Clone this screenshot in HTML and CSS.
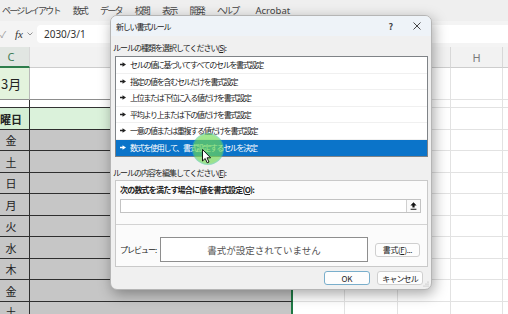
FILE: index.html
```html
<!DOCTYPE html>
<html lang="ja">
<head>
    <meta charset="UTF-8">
    <title>新しい書式ルール</title>
    <link rel="stylesheet" href="styles.css">
</head>
<body>

<div class="excel">
    <div class="ribbon">
        <span>ページ レイアウト</span>
        <span>数式</span>
        <span>データ</span>
        <span>校閲</span>
        <span>表示</span>
        <span>開発</span>
        <span>ヘルプ</span>
        <span class="latin">Acrobat</span>
    </div>

    <div class="fbar">
        <span class="check">✓</span>
        <span class="fx">fx</span>
        <svg class="chev" width="6" height="4" viewBox="0 0 6 4"><path d="M0.5 0.5 L3 3 L5.5 0.5" fill="none" stroke="#888" stroke-width="0.9"/></svg>
        <div class="fbox">2030/3/1</div>
    </div>

    <div class="sheet">
        <div class="row hd">
            <div class="c">C</div><div class="d"></div><div class="e"></div><div class="f"></div><div class="g"></div><div class="h">H</div><div class="i"></div>
        </div>
        <div class="row mon">
            <div class="c">3月</div><div class="d"></div><div class="e"></div><div class="f"></div><div class="g"></div><div class="h"></div><div class="i"></div>
        </div>
        <div class="row gap">
            <div class="c"></div><div class="d"></div><div class="e"></div><div class="f"></div><div class="g"></div><div class="h"></div><div class="i"></div>
        </div>
        <div class="row week">
            <div class="c">曜日</div><div class="d"></div><div class="e"></div><div class="f"></div><div class="g"></div><div class="h"></div><div class="i"></div>
        </div>
        <div class="row sel r1">
            <div class="c">金</div><div class="d"></div><div class="e"></div><div class="f"></div><div class="g"></div><div class="h"></div><div class="i"></div>
        </div>
        <div class="row sel r2">
            <div class="c">土</div><div class="d"></div><div class="e"></div><div class="f"></div><div class="g"></div><div class="h"></div><div class="i"></div>
        </div>
        <div class="row sel r1">
            <div class="c">日</div><div class="d"></div><div class="e"></div><div class="f"></div><div class="g"></div><div class="h"></div><div class="i"></div>
        </div>
        <div class="row sel r2">
            <div class="c">月</div><div class="d"></div><div class="e"></div><div class="f"></div><div class="g"></div><div class="h"></div><div class="i"></div>
        </div>
        <div class="row sel r1">
            <div class="c">火</div><div class="d"></div><div class="e"></div><div class="f"></div><div class="g"></div><div class="h"></div><div class="i"></div>
        </div>
        <div class="row sel r2">
            <div class="c">水</div><div class="d"></div><div class="e"></div><div class="f"></div><div class="g"></div><div class="h"></div><div class="i"></div>
        </div>
        <div class="row sel r1">
            <div class="c">木</div><div class="d"></div><div class="e"></div><div class="f"></div><div class="g"></div><div class="h"></div><div class="i"></div>
        </div>
        <div class="row sel r2">
            <div class="c">金</div><div class="d"></div><div class="e"></div><div class="f"></div><div class="g"></div><div class="h"></div><div class="i"></div>
        </div>
        <div class="row sel r1">
            <div class="c">土</div><div class="d"></div><div class="e"></div><div class="f"></div><div class="g"></div><div class="h"></div><div class="i"></div>
        </div>
    </div>
</div>

<!-- ダイアログ -->
<div class="dlg">
    <div class="dlg-title">
        <span class="dlg-name">新しい書式ルール</span>
        <span class="help">?</span>
        <svg class="close" width="8" height="8" viewBox="0 0 8 8"><path d="M0.5 0.5 L7.5 7.5 M7.5 0.5 L0.5 7.5" stroke="#333" stroke-width="0.9"/></svg>
    </div>
    <div class="dlg-body">
        <div class="lbl lbl-top">ルールの種類を選択してください(<u>S</u>):</div>
        <ul class="rules">
            <li><svg class="arr" width="6" height="5" viewBox="0 0 6 5"><path d="M0 2.5 H3" stroke="currentColor" stroke-width="1.3"/><path d="M2.5 0.3 L6 2.5 L2.5 4.7 Z" fill="currentColor"/></svg>セルの値に基づいてすべてのセルを書式設定</li>
            <li><svg class="arr" width="6" height="5" viewBox="0 0 6 5"><path d="M0 2.5 H3" stroke="currentColor" stroke-width="1.3"/><path d="M2.5 0.3 L6 2.5 L2.5 4.7 Z" fill="currentColor"/></svg>指定の値を含むセルだけを書式設定</li>
            <li><svg class="arr" width="6" height="5" viewBox="0 0 6 5"><path d="M0 2.5 H3" stroke="currentColor" stroke-width="1.3"/><path d="M2.5 0.3 L6 2.5 L2.5 4.7 Z" fill="currentColor"/></svg>上位または下位に入る値だけを書式設定</li>
            <li><svg class="arr" width="6" height="5" viewBox="0 0 6 5"><path d="M0 2.5 H3" stroke="currentColor" stroke-width="1.3"/><path d="M2.5 0.3 L6 2.5 L2.5 4.7 Z" fill="currentColor"/></svg>平均より上または下の値だけを書式設定</li>
            <li><svg class="arr" width="6" height="5" viewBox="0 0 6 5"><path d="M0 2.5 H3" stroke="currentColor" stroke-width="1.3"/><path d="M2.5 0.3 L6 2.5 L2.5 4.7 Z" fill="currentColor"/></svg>一意の値または重複する値だけを書式設定</li>
            <li class="on"><svg class="arr" width="6" height="5" viewBox="0 0 6 5"><path d="M0 2.5 H3" stroke="currentColor" stroke-width="1.3"/><path d="M2.5 0.3 L6 2.5 L2.5 4.7 Z" fill="currentColor"/></svg>数式を使用して、書式設定するセルを決定</li>
        </ul>
        <div class="lbl lbl-mid">ルールの内容を編集してください(<u>E</u>):</div>
        <div class="grp">
            <div class="grp-lbl">次の数式を満たす場合に値を書式設定(<u>O</u>):</div>
            <div class="formula">
                <span class="ref"><svg width="7" height="8" viewBox="0 0 7 8"><path d="M3.5 0.3 L6.6 3.6 H4.6 V5.6 H2.4 V3.6 H0.4 Z" fill="#111"/><path d="M0.6 7.2 H6.4" stroke="#111" stroke-width="1.1"/></svg></span>
            </div>
            <div class="grp-sep"></div>
            <div class="prev-row">
                <span class="prev-lbl">プレビュー:</span>
                <div class="preview">書式が設定されていません</div>
                <button class="btn fmt">書式(<u>F</u>)...</button>
            </div>
        </div>
        <div class="btns">
            <button class="btn ok">OK</button>
            <button class="btn">キャンセル</button>
        </div>
    </div>
    <svg class="grip" width="6" height="6" viewBox="0 0 6 6"><circle cx="5" cy="1" r="0.6" fill="#aaa"/><circle cx="3" cy="3" r="0.6" fill="#aaa"/><circle cx="5" cy="3" r="0.6" fill="#aaa"/><circle cx="1" cy="5" r="0.6" fill="#aaa"/><circle cx="3" cy="5" r="0.6" fill="#aaa"/><circle cx="5" cy="5" r="0.6" fill="#aaa"/></svg>
</div>

<!-- クリック位置の表示 -->
<div class="spot"></div>
<svg class="pointer" width="10" height="15" viewBox="0 0 10 15"><path d="M0.5 0.5 V12 L3.2 9.5 L5.2 13.8 L7 13 L5 8.8 H8.6 Z" fill="#fff" stroke="#000" stroke-width="0.9" stroke-linejoin="round"/></svg>

</body>
</html>
```

FILE: styles.css
```css
* {
    margin: 0;
    padding: 0;
    box-sizing: border-box;
}

body {
    width: 508px;
    height: 314px;
    overflow: hidden;
    position: relative;
    background: #fff;
    font-family: "Noto Sans CJK JP", "Noto Sans", sans-serif;
    color: #222;
}

/* ---- Excel 背景 ---- */
.ribbon {
    height: 21px;
    background: #efefef;
    display: flex;
    align-items: center;
    gap: 13px;
    padding-left: 2px;
    font-size: 9px;
    letter-spacing: -1.8px;
    color: #444;
}

.ribbon .latin {
    margin-left: 4px;
    font-family: "Noto Sans", sans-serif;
    font-size: 9.5px;
    letter-spacing: 0;
}

.fbar {
    height: 26px;
    background: #f4f4f4;
    display: flex;
    align-items: center;
}

.check {
    width: 15px;
    margin-left: 0;
    font-size: 9px;
    color: #9a9a9a;
}

.fx {
    font-family: "Liberation Serif", serif;
    font-style: italic;
    font-size: 11px;
    color: #333;
}

.chev {
    margin-left: 4px;
}

.fbox {
    flex: 1;
    height: 18px;
    margin-left: 4px;
    padding-left: 7px;
    background: #fff;
    border-radius: 4px 0 0 4px;
    font-family: "Noto Sans", sans-serif;
    font-size: 10px;
    line-height: 18px;
    color: #333;
}

.row {
    display: grid;
    grid-template-columns: 30px 263px 52px 53px 53px 52px 1fr;
}

.row > div {
    border-right: 1px solid #e2e2e2;
    border-bottom: 1px solid #e2e2e2;
    display: flex;
    align-items: center;
    justify-content: center;
    padding-right: 7px;
}

.hd {
    height: 21px;
}

.hd > div {
    background: #f2f2f2;
    color: #7a7a7a;
    font-family: "Noto Sans", sans-serif;
    font-size: 11px;
    border-right-color: #d8d8d8;
    border-bottom-color: #cdcdcd;
}

.hd > .c {
    background: #e1e6e2;
    color: #3f7c55;
    border-bottom: 2px solid #2d7d4b;
}

.hd > .h {
    padding-right: 0;
}

.mon {
    height: 32px;
}

.mon > .c {
    background: #e3f3dd;
    justify-content: flex-start;
    padding-left: 1px;
    font-size: 13px;
    color: #222;
}

.mon > .c,
.mon > .d {
    border-bottom-color: #8d8d8d;
}

.mon > .c {
    border-right-color: #b9b9b9;
}

.gap {
    height: 8px;
}

.gap > .c,
.gap > .d {
    border-bottom-color: #333;
}

.gap > .c {
    border-right-color: #333;
}

.week {
    height: 22px;
}

.week > .c {
    background: #d4eed4;
    font-size: 11px;
    font-weight: bold;
}

.week > .d {
    background: #dbf2db;
}

.r1 {
    height: 21px;
}

.r2 {
    height: 22px;
}

.week > .c,
.week > .d,
.sel > .c,
.sel > .d {
    border-bottom-color: #2e2e2e;
}

.week > .c,
.sel > .c {
    border-right-color: #2e2e2e;
}

.sel > .c,
.sel > .d {
    background: #c6c6c6;
}

.sel > .c {
    font-size: 11px;
    color: #222;
}

.sel > .d {
    border-right: 2px solid #1f7a45;
}

/* ---- ダイアログ ---- */
.dlg {
    position: absolute;
    left: 110px;
    top: 15px;
    width: 322px;
    height: 275px;
    background: #f0f0f0;
    border: 1px solid #b5b5b5;
    border-radius: 7px;
    box-shadow: 2px 4px 14px rgba(0, 0, 0, 0.35);
    overflow: hidden;
    font-size: 8px;
    letter-spacing: -1px;
}

.dlg-title {
    height: 20px;
    background: #eef3f8;
    display: flex;
    align-items: center;
    padding-left: 5px;
    color: #222;
    letter-spacing: -1.2px;
}

.dlg-name {
    flex: 1;
}

.help {
    font-size: 9px;
    font-weight: bold;
    color: #444;
    margin-right: 21px;
}

.close {
    margin-right: 10px;
}

.dlg-body {
    padding: 0 3px 0 4px;
}

.lbl {
    line-height: 14px;
    margin-left: -2px;
}

.lbl-top {
    height: 20px;
    padding-top: 5px;
}

.lbl-mid {
    height: 23px;
    padding-top: 9px;
}

.rules {
    list-style: none;
    background: #fff;
    border: 1px solid #7f8387;
    height: 101px;
}

.rules li {
    height: 16.5px;
    display: flex;
    align-items: center;
    padding-left: 4px;
    border-bottom: 1px solid #f0f0f0;
    color: #222;
    white-space: nowrap;
    letter-spacing: -1.3px;
}

.rules li.on {
    background: #0b74c9;
    color: #fff;
    border-bottom: none;
}

.arr {
    margin-right: 4px;
}

.grp {
    height: 87px;
    background: #fbfbfb;
    border: 1px solid #c9c9c9;
}

.grp-lbl {
    font-weight: bold;
    letter-spacing: -0.8px;
    line-height: 12px;
    padding: 3px 0 0 4px;
}

.formula {
    height: 14px;
    margin: 3px 6px 0 4px;
    background: #fff;
    border: 1px solid #c3c3c3;
    display: flex;
    justify-content: flex-end;
}

.ref {
    width: 14px;
    border-left: 1px solid #d0d0d0;
    display: flex;
    align-items: center;
    justify-content: center;
    background: #fafafa;
}

.grp-sep {
    height: 1px;
    margin-top: 11px;
    background: #d3d3d3;
}

.prev-row {
    display: flex;
    align-items: center;
    padding: 12px 0 0 4px;
}

.prev-lbl {
    width: 40px;
    white-space: nowrap;
}

.preview {
    width: 208px;
    height: 25px;
    background: #fff;
    border: 1px solid #8e8e8e;
    display: flex;
    align-items: center;
    justify-content: center;
    font-size: 9.5px;
    letter-spacing: 0;
    color: #555;
}

.btn {
    height: 14px;
    background: #fdfdfd;
    border: 1px solid #cfcfcf;
    border-radius: 3px;
    font-family: inherit;
    font-size: 8px;
    letter-spacing: -0.9px;
    color: #222;
    white-space: nowrap;
}

.fmt {
    width: 45px;
    margin-left: 7px;
    letter-spacing: -0.4px;
}

.btns {
    display: flex;
    justify-content: flex-end;
    gap: 7px;
    padding: 4px 5px 0 0;
}

.btns .btn {
    width: 46px;
}

.btn.ok {
    border: 1.5px solid #79aecb;
    letter-spacing: 0;
}

.grip {
    position: absolute;
    right: 2px;
    bottom: 2px;
}

.spot {
    position: absolute;
    left: 192px;
    top: 133px;
    width: 32px;
    height: 32px;
    border-radius: 50%;
    background: radial-gradient(circle, rgba(112, 218, 84, 0.7) 0, rgba(112, 218, 84, 0.65) 62%, rgba(62, 196, 160, 0.55) 70%, rgba(62, 196, 160, 0.45) 100%);
}

.pointer {
    position: absolute;
    left: 202px;
    top: 149px;
}
```
